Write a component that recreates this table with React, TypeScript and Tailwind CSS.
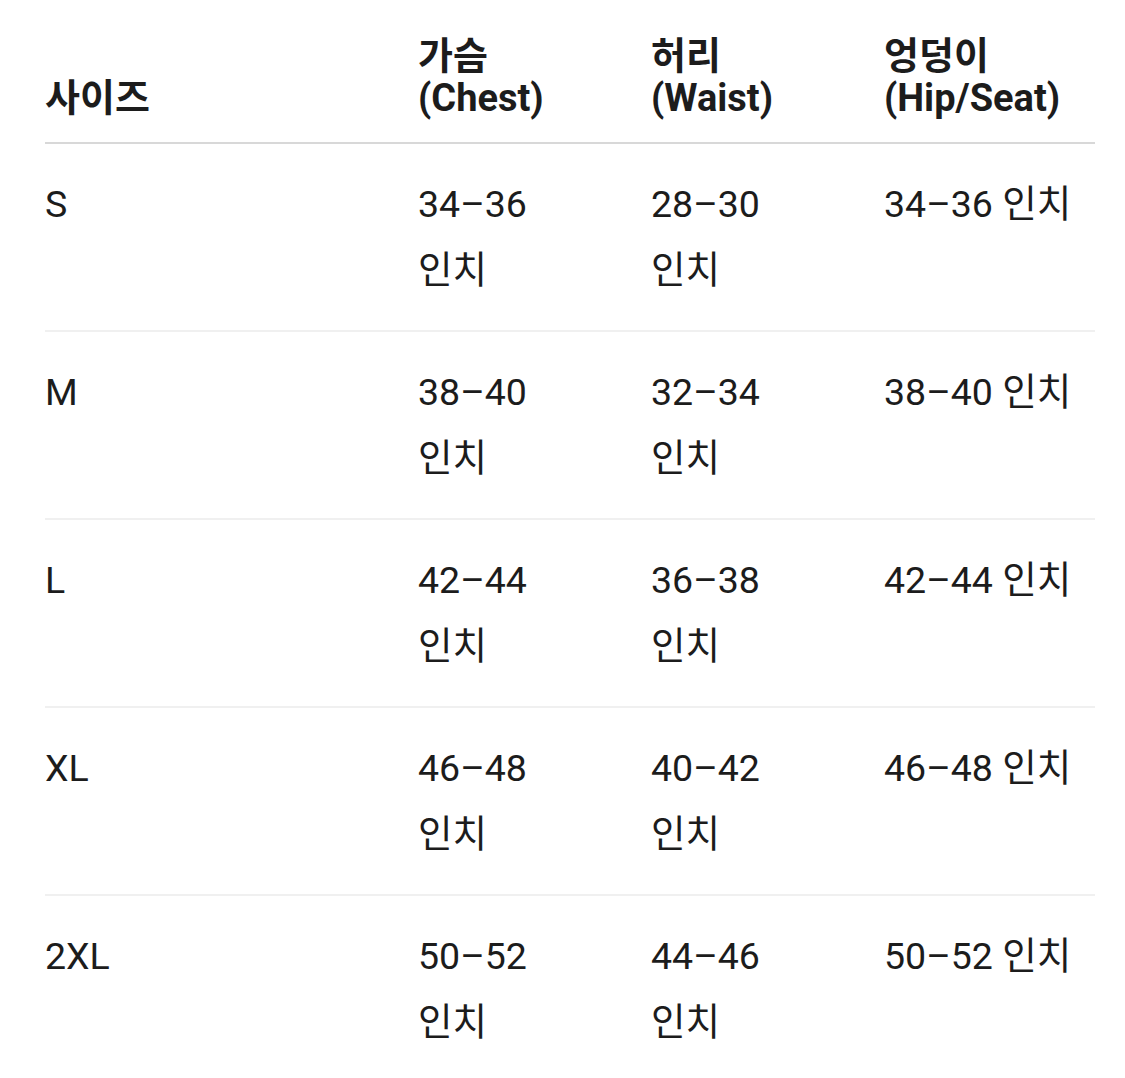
const rows = [
  { size: 'S', chest: '34–36', waist: '28–30', hip: '34–36' },
  { size: 'M', chest: '38–40', waist: '32–34', hip: '38–40' },
  { size: 'L', chest: '42–44', waist: '36–38', hip: '42–44' },
  { size: 'XL', chest: '46–48', waist: '40–42', hip: '46–48' },
  { size: '2XL', chest: '50–52', waist: '44–46', hip: '50–52' },
];

const font = "[font-family:Roboto,'Noto_Sans_CJK_KR',sans-serif]";

export default function App() {
  return (
    <div className={`min-h-[1078px] w-[1125px] bg-white text-[#1c1c1c] ${font}`}>
      <div className="pl-[45px] pr-[30px] pt-[35px]">
        {/* Header */}
        <div className="grid grid-cols-[373px_233px_233px_1fr] items-end border-b-2 border-[#d8d8d8] pb-[23px] text-[38px] font-bold leading-[42px]">
          <div>사이즈</div>
          <div>
            가슴
            <br />
            (Chest)
          </div>
          <div>
            허리
            <br />
            (Waist)
          </div>
          <div>
            엉덩이
            <br />
            (Hip/Seat)
          </div>
        </div>

        {/* Rows */}
        {rows.map((r, i) => (
          <div
            key={r.size}
            className={`grid grid-cols-[373px_233px_233px_1fr] py-[27px] text-[37.5px] leading-[66px] break-keep ${
              i < rows.length - 1 ? 'border-b-2 border-[#f0f0f0]' : ''
            }`}
          >
            <div>{r.size}</div>
            <div className="max-w-[170px]">{r.chest} 인치</div>
            <div className="max-w-[170px]">{r.waist} 인치</div>
            <div>{r.hip} 인치</div>
          </div>
        ))}
      </div>
    </div>
  );
}
